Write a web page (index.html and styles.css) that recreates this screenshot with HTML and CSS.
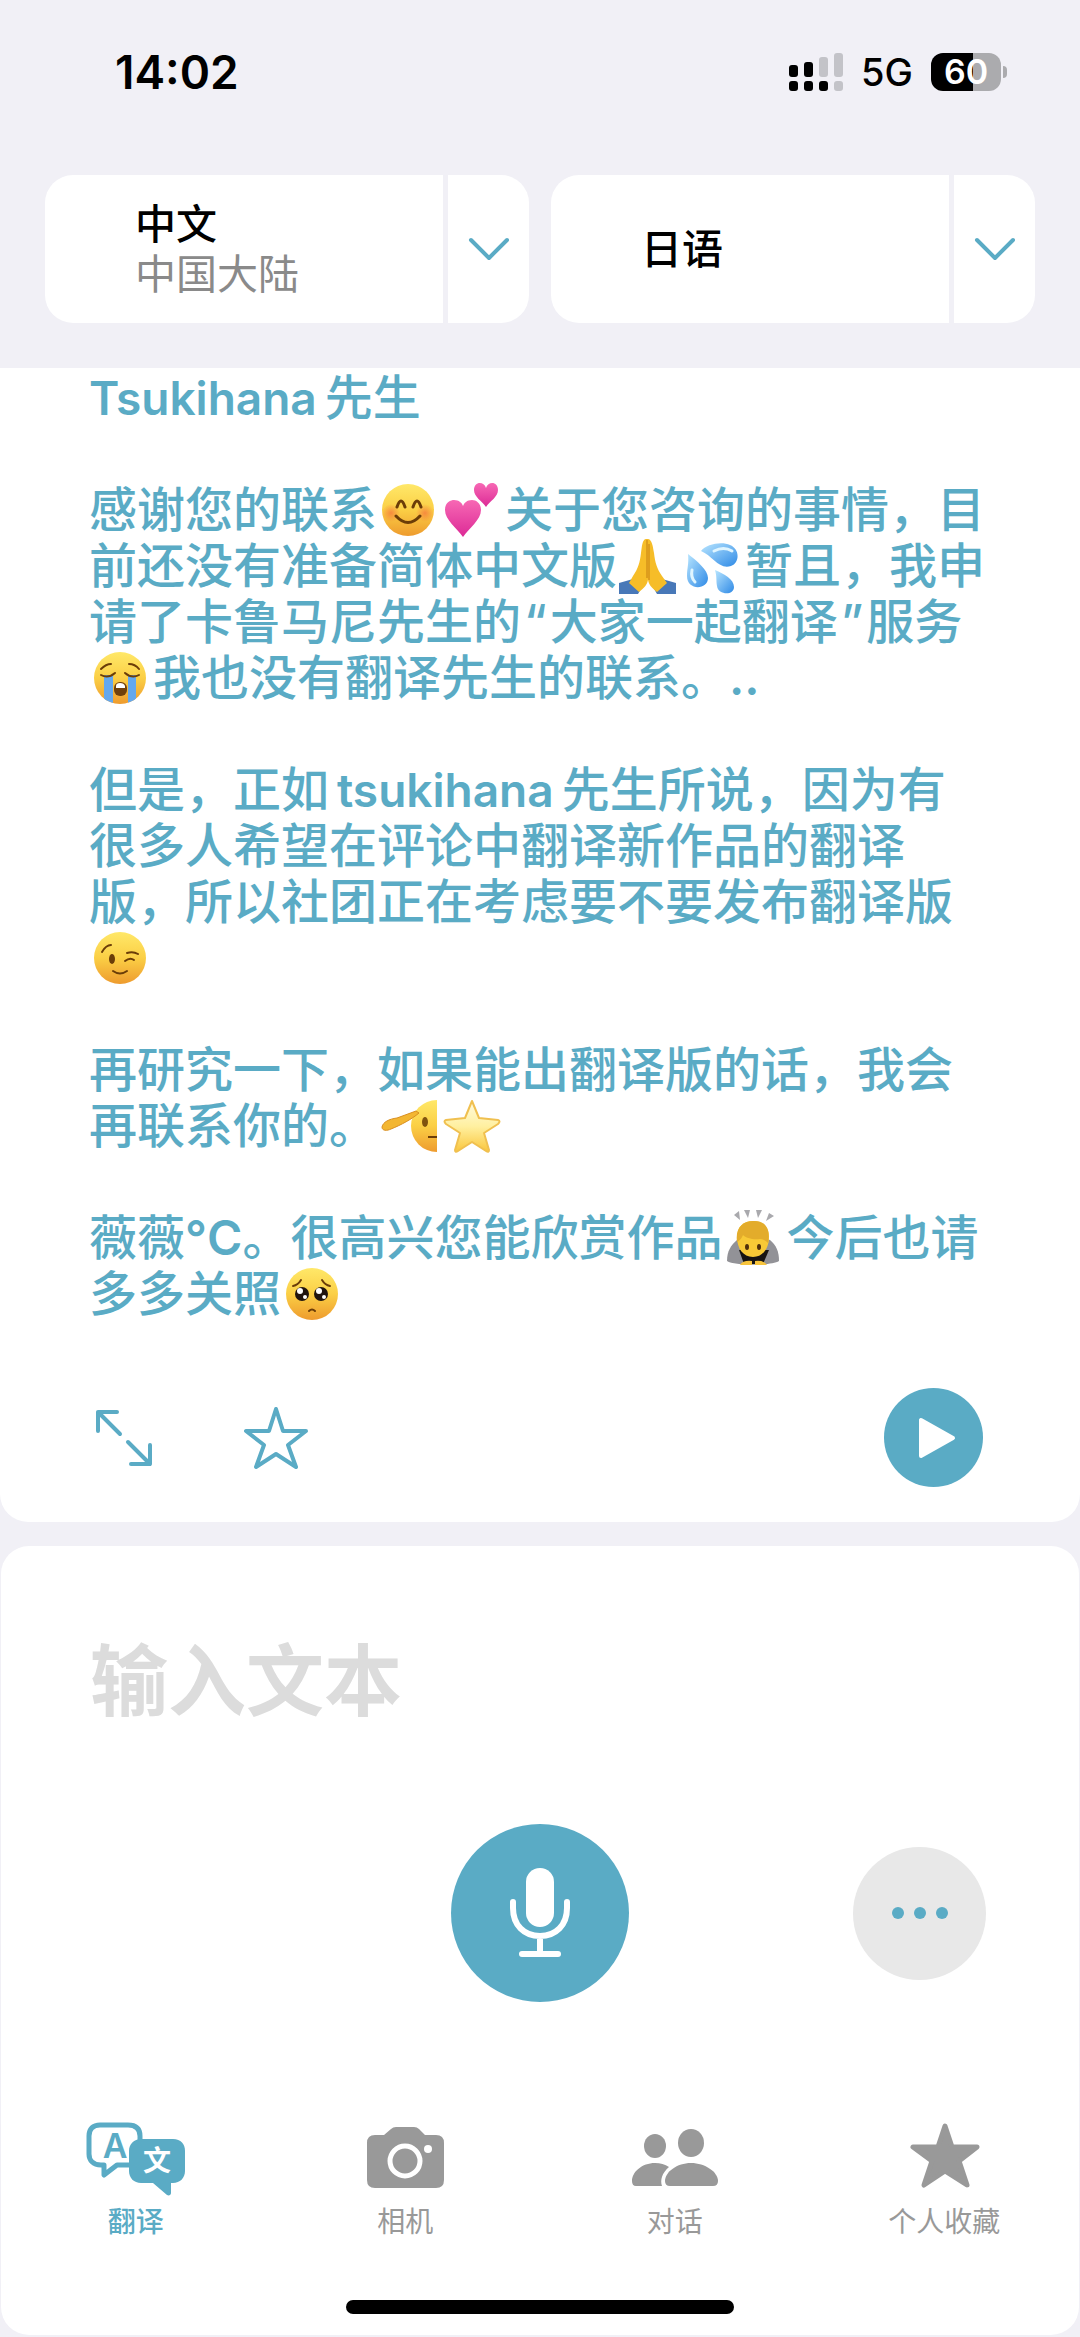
FILE: index.html
```html
<!DOCTYPE html>
<html lang="zh-CN">
<head>
    <meta charset="UTF-8">
    <meta name="viewport" content="width=device-width, initial-scale=1.0">
    <title>翻译</title>
    <link rel="stylesheet" href="styles.css">
</head>
<body>
    <!-- shared emoji fills -->
    <svg class="defs" aria-hidden="true">
        <defs>
            <linearGradient id="face" x1="0" y1="0" x2="0" y2="1">
                <stop offset="0" stop-color="#ffe869"/>
                <stop offset="0.5" stop-color="#fbcf45"/>
                <stop offset="1" stop-color="#ee9b2e"/>
            </linearGradient>
            <radialGradient id="blush">
                <stop offset="0" stop-color="#f4703c" stop-opacity="0.7"/>
                <stop offset="1" stop-color="#f4703c" stop-opacity="0"/>
            </radialGradient>
            <linearGradient id="heart" x1="0" y1="0" x2="0" y2="1">
                <stop offset="0" stop-color="#f768b4"/>
                <stop offset="1" stop-color="#dc2a96"/>
            </linearGradient>
            <linearGradient id="water" x1="0" y1="0" x2="1" y2="1">
                <stop offset="0" stop-color="#b9e6ff"/>
                <stop offset="1" stop-color="#2f8ae6"/>
            </linearGradient>
            <linearGradient id="gold" x1="0" y1="0" x2="0" y2="1">
                <stop offset="0" stop-color="#fffbe0"/>
                <stop offset="0.5" stop-color="#fff0a0"/>
                <stop offset="1" stop-color="#fac63c"/>
            </linearGradient>
            <clipPath id="round"><circle cx="31" cy="28" r="26"/></clipPath>
        </defs>
    </svg>

    <header class="header">
        <div class="status">
            <time class="status-time">14:02</time>
            <div class="status-right">
                <svg class="signal" viewBox="0 0 54 40" aria-hidden="true">
                    <g fill="#000">
                        <rect x="0" y="13" width="9" height="12" rx="3"/>
                        <rect x="15" y="10" width="9" height="15" rx="3"/>
                        <rect x="0" y="29" width="9" height="10" rx="3"/>
                        <rect x="15" y="29" width="9" height="10" rx="3"/>
                        <rect x="30" y="29" width="9" height="10" rx="3"/>
                    </g>
                    <g fill="#c3c3c8">
                        <rect x="30" y="5" width="9" height="20" rx="3"/>
                        <rect x="45" y="1" width="9" height="24" rx="3"/>
                        <rect x="45" y="29" width="9" height="10" rx="3"/>
                    </g>
                </svg>
                <span class="network">5G</span>
                <span class="battery"><span class="battery-level">60</span></span>
            </div>
        </div>
        <div class="languages">
            <div class="language">
                <button class="language-name">中文<small>中国大陆</small></button>
                <button class="language-menu" aria-label="选择源语言">
                    <svg viewBox="0 0 42 24"><path d="M3 3l18 18L39 3"/></svg>
                </button>
            </div>
            <div class="language">
                <button class="language-name">日语</button>
                <button class="language-menu" aria-label="选择目标语言">
                    <svg viewBox="0 0 42 24"><path d="M3 3l18 18L39 3"/></svg>
                </button>
            </div>
        </div>
    </header>

    <main>
        <section class="result">
            <p><span class="latin name">Tsukihana</span>先生</p>
            <p>
                感谢您的联系<svg class="emoji" viewBox="0 0 64 56" role="img" aria-label="微笑">
                    <circle cx="31" cy="28" r="26" fill="url(#face)"/>
                    <circle cx="14" cy="31" r="9" fill="url(#blush)"/>
                    <circle cx="48" cy="31" r="9" fill="url(#blush)"/>
                    <path d="M20 25q4-12 8 0M36 25q4-12 8 0M19 34q12 13 24 0" fill="none" stroke="#6b3d08" stroke-width="3" stroke-linecap="round"/>
                </svg><svg class="emoji" viewBox="0 0 64 56" role="img" aria-label="两颗心">
                    <path d="M22 55C16 46 4 38 4 28c0-8 6-10 9-10 5 0 8 3 9 6 1-3 4-6 9-6 4 0 9 3 9 10 0 10-12 18-18 27z" fill="url(#heart)"/>
                    <path d="M45 25c-4-6-12-10-12-17 0-9 10-9 12-2 2-7 12-7 12 2 0 7-8 11-12 17z" fill="url(#heart)"/>
                </svg>关于您咨询的事情，目<br>
                前还没有准备简体中文版<svg class="emoji" viewBox="0 0 64 56" role="img" aria-label="双手合十">
                    <path d="M2 45l14-4 9 8-4 7H2zM59 45l-14-4-9 8 4 7h19z" fill="#4878b8"/>
                    <path d="M30 1c-5-1-5 8-6 14-1 9-3 16-8 23l-4 7 10 9c5-4 9-8 9-13 0 5 4 9 9 13l10-9-5-7c-5-7-7-14-8-23-1-6-2-15-7-14z" fill="#f6bd28"/>
                    <path d="M30 2v38M32 6v36" fill="none" stroke="#c57f12" stroke-width="1"/>
                </svg><svg class="emoji" viewBox="0 0 64 56" role="img" aria-label="汗滴">
                    <path d="M20 13C25 6 41 3 49 7c10 4 10 18 1 21-12 4-18-10-30-15z" fill="url(#water)"/>
                    <path d="M7 16c9 7 20 16 20 24 0 12-21 13-21-2 0-8 2-12 1-22z" fill="url(#water)"/>
                    <path d="M34 32c9 4 19 9 19 17 0 9-16 8-17-1-1-6 0-9-2-16z" fill="url(#water)"/>
                    <path d="M33 13c6-3 13-3 18 0M11 32c-1 5 0 9 3 12" fill="none" stroke="#dff5ff" stroke-width="3" stroke-linecap="round"/>
                </svg>暂且，我申<br>
                请了卡鲁马尼先生的<span class="quote">“</span>大家一起翻译<span class="quote">”</span>服务<br>
                <svg class="emoji" viewBox="0 0 64 56" role="img" aria-label="大哭">
                    <circle cx="31" cy="28" r="26" fill="url(#face)"/>
                    <path d="M15 25h9v28h-9zM39 25h8v28h-8z" fill="#64a8ee" clip-path="url(#round)"/>
                    <path d="M12 25q7 4 14-2M36 23q7 6 14 2M12 19q5-5 10-5M40 14q6 0 10 5" fill="none" stroke="#6b3d08" stroke-width="2" stroke-linecap="round"/>
                    <rect x="25" y="32" width="13" height="14" rx="6" fill="#70400c"/>
                    <path d="M27 36q0-3 4-3t5 3v2h-9z" fill="#fff"/>
                </svg>我也没有翻译先生的联系。<span class="latin">..</span>
            </p>
            <p>
                但是，正如<span class="latin name inline">tsukihana</span>先生所说，因为有<br>
                很多人希望在评论中翻译新作品的翻译<br>
                版，所以社团正在考虑要不要发布翻译版<br>
                <svg class="emoji" viewBox="0 0 64 56" role="img" aria-label="眨眼">
                    <circle cx="31" cy="28" r="26" fill="url(#face)"/>
                    <ellipse cx="23" cy="29" rx="3" ry="5" fill="#6b3d08"/>
                    <path d="M13 22q4-7 9-7M38 23q6-2 11 1M36 31q5-4 9-1M24 41q7 5 14 0" fill="none" stroke="#6b3d08" stroke-width="2" stroke-linecap="round"/>
                </svg>
            </p>
            <p>
                再研究一下，如果能出翻译版的话，我会<br>
                再联系你的。<svg class="emoji" viewBox="0 0 64 56" role="img" aria-label="敬礼">
                    <path d="M60 2a26 26 0 1 0 0 52z" fill="url(#face)"/>
                    <path d="M39 13L20 20C12 21 6 24 5 29c0 4 5 4 9 2 10-4 21-10 28-16z" fill="#f3b631" stroke="#d98f20" stroke-width="1"/>
                    <ellipse cx="48" cy="24" rx="3" ry="5" fill="#80530f"/>
                    <path d="M51 39h9" stroke="#6b3d08" stroke-width="2"/>
                </svg><svg class="emoji" viewBox="0 0 64 56" role="img" aria-label="星星">
                    <path d="M31 3l7 17 19 2q3 1 0 4L43 35l5 17q0 3-3 1L31 44 17 53q-3 2-3-1l5-17L5 26q-3-3 0-4l19-2z" fill="url(#gold)" stroke="#f0c050" stroke-width="2" stroke-linejoin="round"/>
                </svg>
            </p>
            <p>
                薇薇<span class="latin">°C</span>。很高兴您能欣赏作品<svg class="emoji" viewBox="0 0 64 56" role="img" aria-label="鞠躬">
                    <path d="M12 5l5-4 1 9zM22 0h6l-2 8zM34 0h6l-4 8zM47 3l5 3-8 5z" fill="#a9a9ad"/>
                    <path d="M5 51c0-10 4-16 10-21l7-2h20l6 2c6 5 9 11 9 21-8 5-44 5-52 0z" fill="#929297"/>
                    <path d="M17 40h30l-6 14H22z" fill="#171412"/>
                    <path d="M15 27c0-11 7-16 16-16s16 5 16 16c0 11-6 20-16 20S15 38 15 27z" fill="#f8c936"/>
                    <path d="M15 32c-2-14 6-21 16-21 12-1 18 8 15 22-3-3-5-4-8-4-7 1-14-1-17-4-1 3-3 5-6 7z" fill="#e3ac2b"/>
                    <ellipse cx="25" cy="37" rx="2" ry="3" fill="#51300b"/>
                    <ellipse cx="37" cy="37" rx="2" ry="3" fill="#51300b"/>
                    <path d="M18 55q3-5 12-4v4zM33 51q9-1 12 4H33z" fill="#f7c43c"/>
                </svg>今后也请<br>
                多多关照<svg class="emoji" viewBox="0 0 64 56" role="img" aria-label="恳求">
                    <circle cx="31" cy="28" r="26" fill="url(#face)"/>
                    <circle cx="21" cy="28" r="7" fill="#20140f"/>
                    <circle cx="40" cy="28" r="7" fill="#20140f"/>
                    <g fill="#fff">
                        <circle cx="19" cy="25" r="3"/><circle cx="24" cy="31" r="2"/>
                        <circle cx="38" cy="25" r="3"/><circle cx="43" cy="31" r="2"/>
                    </g>
                    <path d="M12 20q5-1 8-6M41 14q3 5 8 6M28 45q3-3 6 0" fill="none" stroke="#6b3d08" stroke-width="2" stroke-linecap="round"/>
                </svg>
            </p>
            <div class="actions">
                <button class="action" aria-label="展开">
                    <svg viewBox="0 0 60 60"><path d="M4 23V4h19M4 4l22 22M56 37v19H37M56 56L34 34"/></svg>
                </button>
                <button class="action" aria-label="收藏">
                    <svg class="star" viewBox="0 0 68 66"><path d="M34 4l7 22h23L46 40l8 22-20-13-20 13 8-22L4 26h23z"/></svg>
                </button>
                <button class="play" aria-label="播放">
                    <svg viewBox="0 0 38 42"><path d="M3 3v36l32-18z"/></svg>
                </button>
            </div>
        </section>

        <section class="compose">
            <input class="compose-text" type="text" placeholder="输入文本" aria-label="输入文本">
            <div class="controls">
                <button class="mic" aria-label="听写">
                    <svg viewBox="0 0 64 92">
                        <rect x="18" y="1" width="28" height="59" rx="14" fill="#fff"/>
                        <path d="M5 35v6c0 17 11 28 27 28s27-11 27-28v-6M32 70v17M14 87h36"/>
                    </svg>
                </button>
                <button class="more" aria-label="更多"><i></i><i></i><i></i></button>
            </div>
            <nav class="tabs">
                <a class="tab active" href="#translate">
                    <svg viewBox="0 0 100 74">
                        <path d="M31 43L18 53V43h-3C7 43 3 38 3 32V14C3 7 7 3 14 3h28c8 0 12 4 12 11v29z" fill="#fff" stroke="currentColor" stroke-width="5" stroke-linejoin="round"/>
                        <text class="icon-letter" x="29" y="36" fill="currentColor">A</text>
                        <path d="M55 17h32c8 0 12 5 12 12v20c0 7-5 12-12 12h-2v10c0 2-2 3-4 2L67 61H55c-7 0-12-5-12-12V29c0-7 5-12 12-12z" fill="currentColor"/>
                        <text class="icon-character" x="71" y="49" fill="#fff">文</text>
                    </svg>
                    翻译
                </a>
                <a class="tab" href="#camera">
                    <svg viewBox="0 0 100 74">
                        <path d="M20 13h9l7-6q2-2 5-2h18q3 0 5 2l6 6h11q8 0 8 8v37q0 8-8 8H20q-8 0-8-8V21q0-8 8-8z" fill="currentColor"/>
                        <circle cx="50" cy="39" r="15" fill="none" stroke="#fff" stroke-width="5"/>
                        <circle cx="73" cy="27" r="4" fill="#fff"/>
                    </svg>
                    相机
                </a>
                <a class="tab" href="#conversation">
                    <svg viewBox="0 0 100 74">
                        <g fill="currentColor">
                            <ellipse cx="30" cy="24" rx="11" ry="12"/>
                            <ellipse cx="66" cy="21" rx="13" ry="14"/>
                            <path d="M11 64q-4 0-4-5c0-9 10-18 23-18q8 0 14 4c-7 6-9 13-7 19z"/>
                            <path d="M45 64q-5 0-5-5c0-9 12-18 26-18s27 9 27 18q0 5-5 5z"/>
                        </g>
                    </svg>
                    对话
                </a>
                <a class="tab" href="#favorites">
                    <svg viewBox="0 0 100 74">
                        <path d="M51 4l7 21h25L65 39l8 24-22-14-21 14 8-24-19-14h25z" fill="currentColor" stroke="currentColor" stroke-width="5" stroke-linejoin="round"/>
                    </svg>
                    个人收藏
                </a>
            </nav>
            <div class="home-indicator"></div>
        </section>
    </main>
</body>
</html>
```
FILE: styles.css
```css
:root {
    --accent: #5aabc5;
    --background: #f1f0f6;
    --inactive: #999999;
    --side: 89px;
}

* {
    box-sizing: border-box;
}

body {
    margin: 0;
    background: var(--background);
    font-family: Inter, "Noto Sans CJK SC", sans-serif;
}

button {
    padding: 0;
    border: none;
    background: none;
    font: inherit;
    cursor: pointer;
}

svg {
    display: block;
}

.defs {
    position: absolute;
    width: 0;
    height: 0;
}

/* header */
.header {
    padding: 44px 45px 45px;
}

.status {
    display: flex;
    justify-content: space-between;
    align-items: center;
    height: 56px;
    margin-bottom: 75px;
    padding: 0 28px 0 70px;
}

.status-time {
    font-size: 46px;
    font-weight: 600;
}

.status-right {
    display: flex;
    align-items: center;
}

.signal {
    width: 54px;
    height: 40px;
}

.network {
    margin: 0 18px;
    font-size: 38px;
    font-weight: 500;
}

.battery {
    position: relative;
    width: 70px;
    margin-right: 6px;
}

.battery::after {
    content: "";
    position: absolute;
    top: 13px;
    right: -6px;
    width: 4px;
    height: 12px;
    border-radius: 0 6px 6px 0;
    background: #ababae;
}

.battery-level {
    display: block;
    border-radius: 12px;
    background: linear-gradient(to right, #000 60%, #ababae 60%);
    color: #fff;
    font-size: 34px;
    font-weight: 600;
    line-height: 38px;
    text-align: center;
}

.languages {
    display: flex;
    gap: 22px;
}

.language {
    display: flex;
    flex: 1;
    gap: 5px;
    height: 148px;
    overflow: hidden;
    border-radius: 28px;
}

.language-name {
    flex: 1;
    padding-left: 90px;
    background: #fff;
    color: #000;
    font-size: 41px;
    font-weight: 500;
    line-height: 50px;
    text-align: left;
}

.language-name small {
    display: block;
    color: #8a8a8a;
    font-size: 41px;
    font-weight: 400;
}

.language-menu {
    display: flex;
    justify-content: center;
    align-items: center;
    width: 81px;
    background: #fff;
}

.language-menu svg {
    width: 42px;
    height: 24px;
    fill: none;
    stroke: var(--accent);
    stroke-width: 4;
    stroke-linecap: round;
    stroke-linejoin: round;
}

/* translation */
.result {
    padding: 2px 97px 35px var(--side);
    border-radius: 0 0 28px 28px;
    background: #fff;
    color: var(--accent);
    font-size: 48px;
    font-weight: 500;
    line-height: 56px;
}

.result p {
    margin: 0 0 56px;
    white-space: nowrap;
}

.latin {
    font-weight: 600;
}

.latin.name {
    margin-right: 8px;
    font-size: 46px;
}

.latin.inline {
    margin-left: 8px;
}

.quote {
    padding: 0 3px;
}

.emoji {
    display: inline-block;
    width: 64px;
    height: 56px;
    vertical-align: top;
}

.actions {
    display: flex;
    align-items: center;
    gap: 88px;
    padding: 10px 0 0 5px;
}

.action svg {
    width: 60px;
    height: 60px;
    fill: none;
    stroke: var(--accent);
    stroke-width: 4;
    stroke-linecap: round;
    stroke-linejoin: round;
}

.action .star {
    width: 68px;
    height: 66px;
}

.play {
    display: flex;
    justify-content: center;
    align-items: center;
    width: 99px;
    height: 99px;
    margin-left: auto;
    padding-left: 6px;
    border-radius: 50%;
    background: var(--accent);
}

.play svg {
    width: 38px;
    height: 42px;
    fill: #fff;
    stroke: #fff;
    stroke-width: 4;
    stroke-linejoin: round;
}

/* text entry */
.compose {
    margin: 24px 1px 2px;
    padding-top: 80px;
    border-radius: 28px;
    background: #fff;
}

.compose-text {
    display: block;
    width: 100%;
    height: 110px;
    padding: 0 var(--side);
    border: none;
    outline: none;
    background: none;
    color: var(--accent);
    font-family: inherit;
    font-size: 78px;
    font-weight: 600;
}

.compose-text::placeholder {
    color: #dcdcdc;
    opacity: 1;
}

.controls {
    display: grid;
    grid-template-columns: 1fr auto 1fr;
    align-items: center;
    margin-top: 88px;
    padding: 0 93px;
}

.mic {
    display: flex;
    grid-column: 2;
    justify-content: center;
    align-items: center;
    width: 178px;
    height: 178px;
    border-radius: 50%;
    background: var(--accent);
}

.mic svg {
    width: 64px;
    height: 92px;
    fill: none;
    stroke: #fff;
    stroke-width: 6;
    stroke-linecap: round;
}

.mic rect {
    stroke: none;
}

.more {
    display: flex;
    justify-content: center;
    align-items: center;
    justify-self: end;
    gap: 10px;
    width: 133px;
    height: 133px;
    border-radius: 50%;
    background: #e8e8e8;
}

.more i {
    width: 12px;
    height: 12px;
    border-radius: 50%;
    background: var(--accent);
}

.tabs {
    display: flex;
    margin-top: 120px;
}

.tab {
    display: flex;
    flex: 1;
    flex-direction: column;
    align-items: center;
    gap: 6px;
    color: var(--inactive);
    font-size: 28px;
    line-height: 40px;
    text-decoration: none;
}

.tab.active {
    color: var(--accent);
    font-weight: 500;
}

.tab svg {
    width: 100px;
    height: 74px;
}

.icon-letter,
.icon-character {
    font-size: 34px;
    font-weight: 600;
    text-anchor: middle;
}

.icon-character {
    font-size: 28px;
}

.home-indicator {
    width: 36%;
    height: 14px;
    margin: 58px auto 0;
    border-radius: 7px;
    background: #000;
}

.compose::after {
    content: "";
    display: block;
    height: 21px;
}
```
